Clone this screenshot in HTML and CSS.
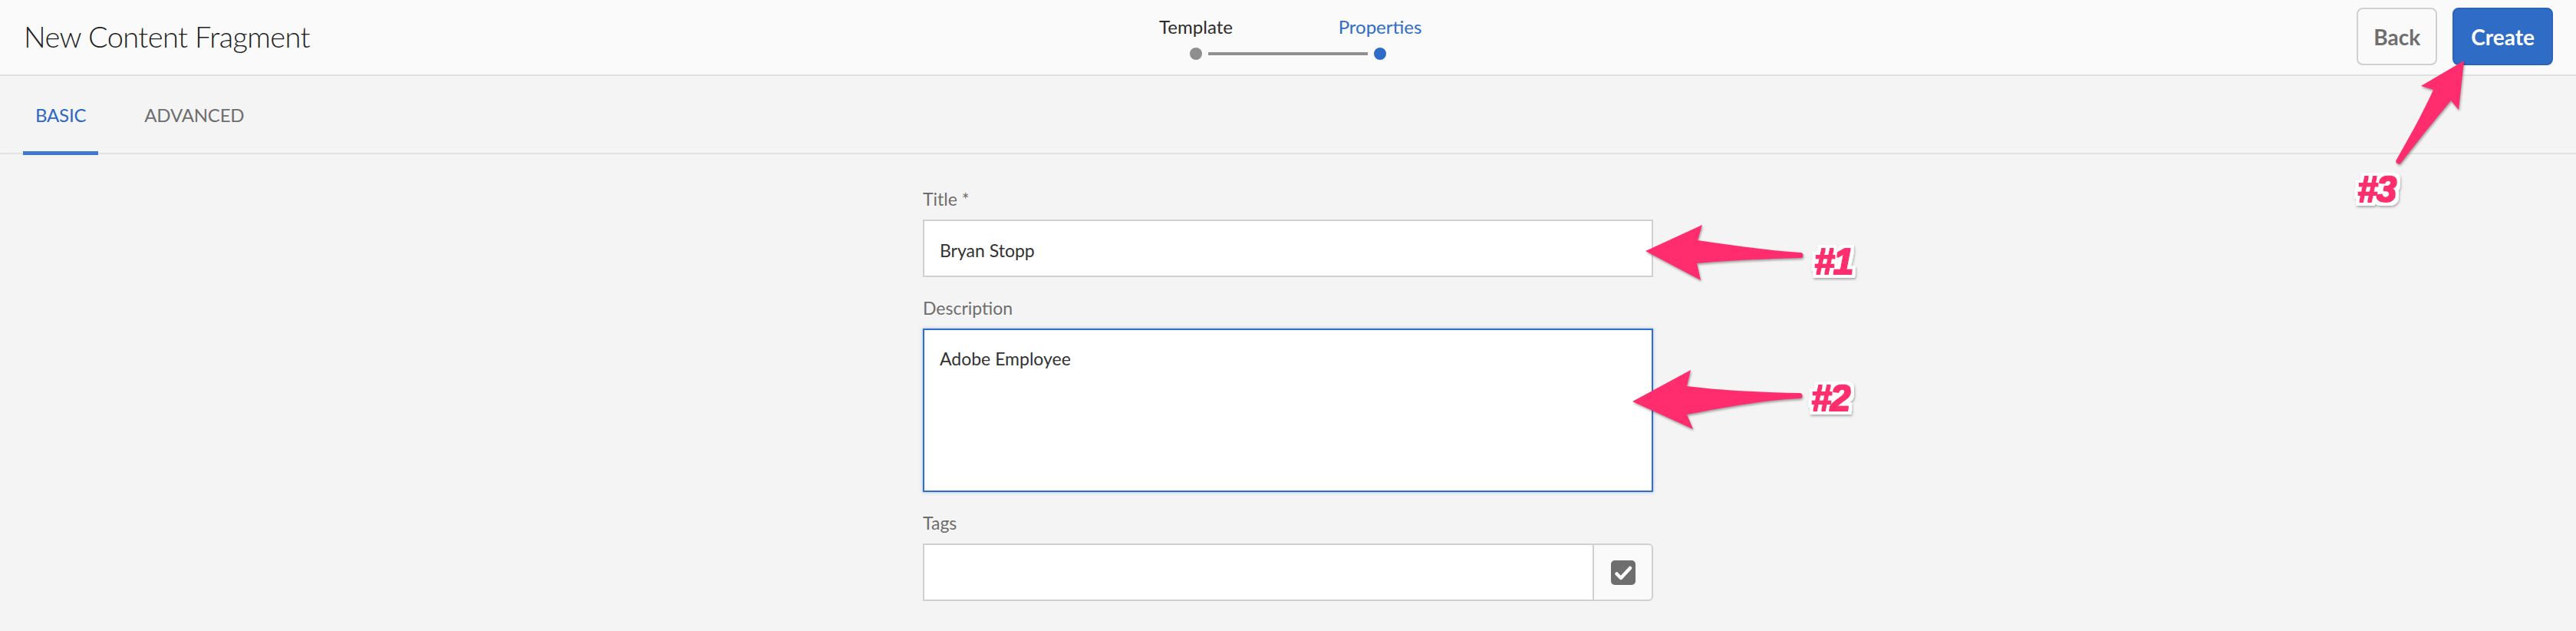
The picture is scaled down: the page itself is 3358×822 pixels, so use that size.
FILE: index.html
```html
<!DOCTYPE html>
<html lang="en">
<head>
<meta charset="utf-8">
<title>New Content Fragment</title>
<link rel="stylesheet" href="styles.css">
</head>
<body>
<div class="page">
  <header class="shell-header">
    <h1 class="page-title">New Content Fragment</h1>
    <div class="stepper">
      <span class="step-label step-one">Template</span>
      <span class="step-label step-two current">Properties</span>
      <span class="connector"></span>
      <span class="dot step-one"></span>
      <span class="dot step-two current"></span>
    </div>
    <div class="actions">
      <button class="btn btn-secondary" type="button">Back</button>
      <button class="btn btn-primary" type="button">Create</button>
    </div>
  </header>

  <nav class="tabs">
    <a class="tab active">BASIC</a>
    <a class="tab">ADVANCED</a>
  </nav>

  <main class="form">
    <div class="field">
      <label class="field-label" for="title">Title *</label>
      <input class="text-input" id="title" type="text" value="Bryan Stopp">
    </div>
    <div class="field">
      <label class="field-label" for="desc">Description</label>
      <textarea class="textarea" id="desc">Adobe Employee</textarea>
    </div>
    <div class="field">
      <label class="field-label" for="tags">Tags</label>
      <div class="tag-input">
        <input class="text-input tag-text" id="tags" type="text" value="">
        <span class="tag-btn">
          <svg width="32" height="32" viewBox="0 0 32 32" aria-hidden="true">
            <rect x="0" y="0" width="32" height="32" rx="5" fill="#6e6e6e"/>
            <path d="M7.5 17.5 L13 23 L25 10" fill="none" stroke="#fff" stroke-width="4.5" stroke-linecap="round" stroke-linejoin="round"/>
          </svg>
        </span>
      </div>
    </div>
  </main>

  <svg class="annotations" width="3358" height="822" viewBox="0 0 3358 822" aria-hidden="true">
    <defs>
      <filter id="callout-fx" x="-30%" y="-30%" width="160%" height="160%">
        <feMorphology in="SourceAlpha" operator="dilate" radius="1" result="thick"/>
        <feMorphology in="SourceAlpha" operator="dilate" radius="5" result="outline"/>
        <feGaussianBlur in="outline" stdDeviation="1.5" result="blur"/>
        <feOffset in="blur" dx="1" dy="2" result="shadowOff"/>
        <feFlood flood-color="#000000" flood-opacity="0.3" result="shadowColor"/>
        <feComposite in="shadowColor" in2="shadowOff" operator="in" result="shadow"/>
        <feFlood flood-color="#ffffff" result="whiteColor"/>
        <feComposite in="whiteColor" in2="outline" operator="in" result="white"/>
        <feFlood flood-color="#ff2d6e" result="pinkColor"/>
        <feComposite in="pinkColor" in2="thick" operator="in" result="pink"/>
        <feMerge>
          <feMergeNode in="shadow"/>
          <feMergeNode in="white"/>
          <feMergeNode in="pink"/>
        </feMerge>
      </filter>
    </defs>
    <g class="arrow">
      <path d="M2145,327 L2219,293 L2213,313 C2260,320 2305,326 2347,329 A3.5,3.5 0 0 1 2347,336 C2305,337 2258,339 2212,343 L2217,365 Z"/>
      <path d="M2128,523 L2204,482 L2199,503 C2245,509 2300,511 2346,512 A3.5,3.5 0 0 1 2346,519 C2300,521 2245,531 2199,540 L2207,559 Z"/>
      <path d="M3212,79 L3205,143 L3195,131 C3172,158 3150,186 3130,212 A3.5,3.5 0 0 1 3124,208 C3140,180 3158,148 3172,117 L3156,112 Z"/>
    </g>
    <text class="callout" x="2365" y="357" filter="url(#callout-fx)">#1</text>
    <text class="callout" x="2361" y="535" filter="url(#callout-fx)">#2</text>
    <text class="callout" x="3073" y="263" filter="url(#callout-fx)">#3</text>
  </svg>
</div>
</body>
</html>
```

FILE: styles.css
```css
* { box-sizing: border-box; }

html, body {
  margin: 0;
  padding: 0;
}

body {
  width: 3358px;
  height: 822px;
  overflow: hidden;
  background: #f4f4f4;
  font-family: Lato, "Open Sans", sans-serif;
  color: #323232;
}

.page {
  position: relative;
  width: 3358px;
  height: 822px;
}

/* ---------- header ---------- */
.shell-header {
  display: grid;
  grid-template-columns: 1fr auto 1fr;
  align-items: start;
  height: 99px;
  background: #fafafa;
  border-bottom: 2px solid #e1e1e1;
}

.page-title {
  margin: 24px 0 0 31px;
  font-size: 38px;
  line-height: 46px;
  font-weight: 300;
  letter-spacing: -0.6px;
  color: #1e1e1e;
  white-space: nowrap;
}

.stepper {
  display: grid;
  grid-template-columns: repeat(4, 120px);
  grid-template-rows: 28px 16px;
  row-gap: 13px;
  margin-top: 21px;
}

.step-label {
  grid-row: 1;
  text-align: center;
  font-size: 24px;
  line-height: 28px;
  color: #2c2c2c;
  white-space: nowrap;
}

.step-label.current { color: #2f6cc5; }

.step-one { grid-column: 1 / 3; }
.step-two { grid-column: 3 / 5; }

.dot {
  grid-row: 2;
  justify-self: center;
  width: 16px;
  height: 16px;
  border-radius: 50%;
  background: #8e8e8e;
}

.dot.current { background: #2f6cc7; }

.connector {
  grid-row: 2;
  grid-column: 2 / 4;
  align-self: center;
  height: 4px;
  margin: 0 16px;
  background: #909090;
}

.actions {
  justify-self: end;
  display: flex;
  gap: 20px;
  margin: 10px 30px 0 0;
}

.btn {
  height: 75px;
  padding: 0 20px;
  border-radius: 8px;
  border: 2px solid #d0d0d0;
  font-family: Lato, "Open Sans", sans-serif;
  font-size: 28px;
  font-weight: 700;
}

.btn-secondary {
  background: #fafafa;
  color: #6e6e6e;
}

.btn-primary {
  background: #2f6cc6;
  border-color: #2a63b9;
  color: #ffffff;
  padding: 0 22px;
}

/* ---------- tabs ---------- */
.tabs {
  display: flex;
  gap: 44px;
  height: 102px;
  padding-left: 30px;
  border-bottom: 2px solid #e3e3e3;
}

.tab {
  position: relative;
  display: flex;
  align-items: center;
  padding: 0 16px;
  font-size: 24px;
  letter-spacing: -0.2px;
  color: #6e6e6e;
}

.tab.active { color: #2d67c4; }

.tab.active::after {
  content: "";
  position: absolute;
  left: 0;
  right: 0;
  bottom: -3px;
  height: 5px;
  background: #4079d0;
}

/* ---------- form ---------- */
.form {
  width: 952px;
  margin: 0 auto;
  padding-top: 44px;
}

.field + .field { margin-top: 26px; }

.field-label {
  display: block;
  margin-bottom: 13px;
  font-size: 23px;
  line-height: 28px;
  color: #6e6e6e;
}

.text-input {
  display: block;
  width: 100%;
  height: 75px;
  padding: 5px 20px 0;
  border: 2px solid #d0d0d0;
  border-radius: 0;
  background: #ffffff;
  font-family: Lato, "Open Sans", sans-serif;
  font-size: 23px;
  color: #323232;
  outline: none;
}

.textarea {
  display: block;
  width: 100%;
  height: 213px;
  padding: 22px 20px;
  border: 2px solid #2f6fcc;
  box-shadow: 0 0 4px rgba(50, 110, 200, 0.45);
  background: #ffffff;
  font-family: Lato, "Open Sans", sans-serif;
  font-size: 23px;
  line-height: 30px;
  color: #323232;
  resize: none;
  outline: none;
}

.tag-input {
  display: flex;
  height: 75px;
}

.tag-text {
  flex: 1;
  border-right: none;
}

.tag-btn {
  display: flex;
  align-items: center;
  justify-content: center;
  width: 79px;
  height: 75px;
  background: #fafafa;
  border: 2px solid #d0d0d0;
  border-radius: 0 6px 6px 0;
}

.tag-btn svg { display: block; }

/* ---------- annotations ---------- */
.annotations {
  position: absolute;
  left: 0;
  top: 0;
  pointer-events: none;
}

.arrow {
  fill: #ff2d6e;
  filter: drop-shadow(1px 2px 1.5px rgba(0, 0, 0, 0.35));
}

.callout {
  font-family: "Liberation Sans", Arial, sans-serif;
  font-weight: 700;
  font-style: italic;
  font-size: 48px;
  letter-spacing: -2px;
  fill: #ff2d6e;
}
```
